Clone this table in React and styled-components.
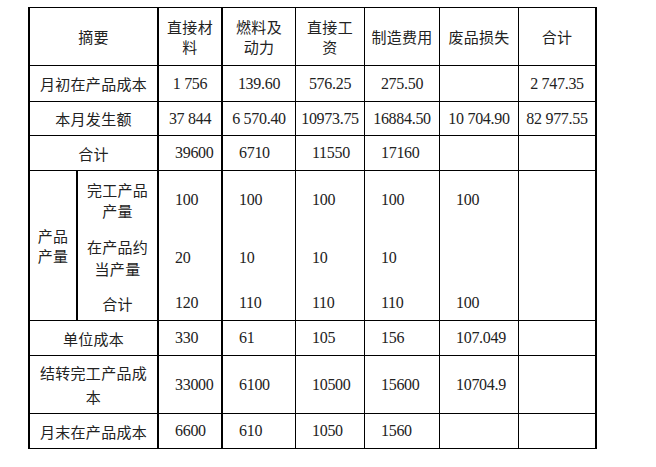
import React from "react";
import styled, { createGlobalStyle, css } from "styled-components";

const GlobalStyle = createGlobalStyle`
  html, body { margin: 0; padding: 0; background: #fff; }
  * { box-sizing: border-box; }
`;

const Page = styled.div`
  padding: 7px 0 0 28px;
  width: 656px;
  height: 467px;
  background: #fff;
`;

const Table = styled.table`
  border-collapse: separate;
  border-spacing: 0;
  table-layout: fixed;
  width: 569px;
  border-top: 1px solid #000;
  border-left: 2px solid #000;
`;

const cellBase = css`
  padding: 0 4px;
  vertical-align: middle;
  color: #222;
  border-right: ${(p) => p.$right}px solid #000;
  border-bottom: ${(p) => (p.$bottom ? "1px solid #000" : "none")};
  height: ${(p) => (p.$h ? `${p.$h}px` : "auto")};
  overflow: hidden;
  white-space: nowrap;
`;

const LabelCell = styled.td`
  ${cellBase};
  text-align: center;
  font-family: "Noto Sans CJK SC", "Liberation Serif", sans-serif;
  font-size: 15px;
  line-height: ${(p) => p.$lh || 21}px;
  letter-spacing: 0.3px;
`;

const NumCell = styled.td`
  ${cellBase};
  font-family: "Liberation Serif", "Noto Sans CJK SC", serif;
  font-size: 16px;
  letter-spacing: -0.3px;
  line-height: 20px;
  text-align: ${(p) => (p.$left ? "left" : "center")};
  padding-left: ${(p) => (p.$left ? "16px" : "2px")};
  padding-right: 2px;
`;

const widths = [48, 81, 64, 73, 69, 75, 79, 78];
const rights = [2, 2, 2, 1, 1, 1, 1, 2];

const ml = (s) =>
  s.split("\n").map((part, i, arr) => (
    <React.Fragment key={i}>
      {part}
      {i < arr.length - 1 && <br />}
    </React.Fragment>
  ));

const header = ["直接材\n料", "燃料及\n动力", "直接工\n资", "制造费用", "废品损失", "合计"];

const simpleRows = [
  { label: "月初在产品成本", h: 36, left: false, vals: ["1 756", "139.60", "576.25", "275.50", "", "2 747.35"] },
  { label: "本月发生额", h: 34, left: false, vals: ["37 844", "6 570.40", "10973.75", "16884.50", "10 704.90", "82 977.55"] },
  { label: "合计", h: 35, left: true, vals: ["39600", "6710", "11550", "17160", "", ""] },
];

const productRows = [
  { label: "完工产品\n产量", h: 58, lh: 21, vals: ["100", "100", "100", "100", "100", ""] },
  { label: "在产品约\n当产量", h: 57, lh: 22, vals: ["20", "10", "10", "10", "", ""] },
  { label: "合计", h: 35, lh: 21, vals: ["120", "110", "110", "110", "100", ""] },
];

const tailRows = [
  { label: "单位成本", h: 35, lh: 21, vals: ["330", "61", "105", "156", "107.049", ""] },
  { label: "结转完工产品成\n本", h: 58, lh: 24, vals: ["33000", "6100", "10500", "15600", "10704.9", ""] },
  { label: "月末在产品成本", h: 35, lh: 21, vals: ["6600", "610", "1050", "1560", "", ""] },
];

const Nums = ({ vals, h, left, bottom = true }) =>
  vals.map((v, i) => (
    <NumCell key={i} $right={rights[i + 2]} $bottom={bottom} $h={h} $left={left}>
      {v}
    </NumCell>
  ));

export default function App() {
  return (
    <Page>
      <GlobalStyle />
      <Table>
        <colgroup>
          {widths.map((w, i) => (
            <col key={i} style={{ width: w }} />
          ))}
        </colgroup>
        <tbody>
          <tr>
            <LabelCell colSpan={2} $right={2} $bottom $h={58}>
              摘要
            </LabelCell>
            {header.map((t, i) => (
              <LabelCell key={i} $right={rights[i + 2]} $bottom $h={58} $lh={20}>
                {ml(t)}
              </LabelCell>
            ))}
          </tr>
          {simpleRows.map((r, ri) => (
            <tr key={ri}>
              <LabelCell colSpan={2} $right={2} $bottom $h={r.h}>
                {r.label}
              </LabelCell>
              <Nums vals={r.vals} h={r.h} left={r.left} />
            </tr>
          ))}
          {productRows.map((r, ri) => {
            const last = ri === productRows.length - 1;
            return (
              <tr key={`p${ri}`}>
                {ri === 0 && (
                  <LabelCell rowSpan={3} $right={2} $bottom $lh={20}>
                    {ml("产品\n产量")}
                  </LabelCell>
                )}
                <LabelCell $right={2} $bottom={last} $h={r.h} $lh={r.lh}>
                  {ml(r.label)}
                </LabelCell>
                <Nums vals={r.vals} h={r.h} left bottom={last} />
              </tr>
            );
          })}
          {tailRows.map((r, ri) => (
            <tr key={`t${ri}`}>
              <LabelCell colSpan={2} $right={2} $bottom $h={r.h} $lh={r.lh}>
                {ml(r.label)}
              </LabelCell>
              <Nums vals={r.vals} h={r.h} left />
            </tr>
          ))}
        </tbody>
      </Table>
    </Page>
  );
}
